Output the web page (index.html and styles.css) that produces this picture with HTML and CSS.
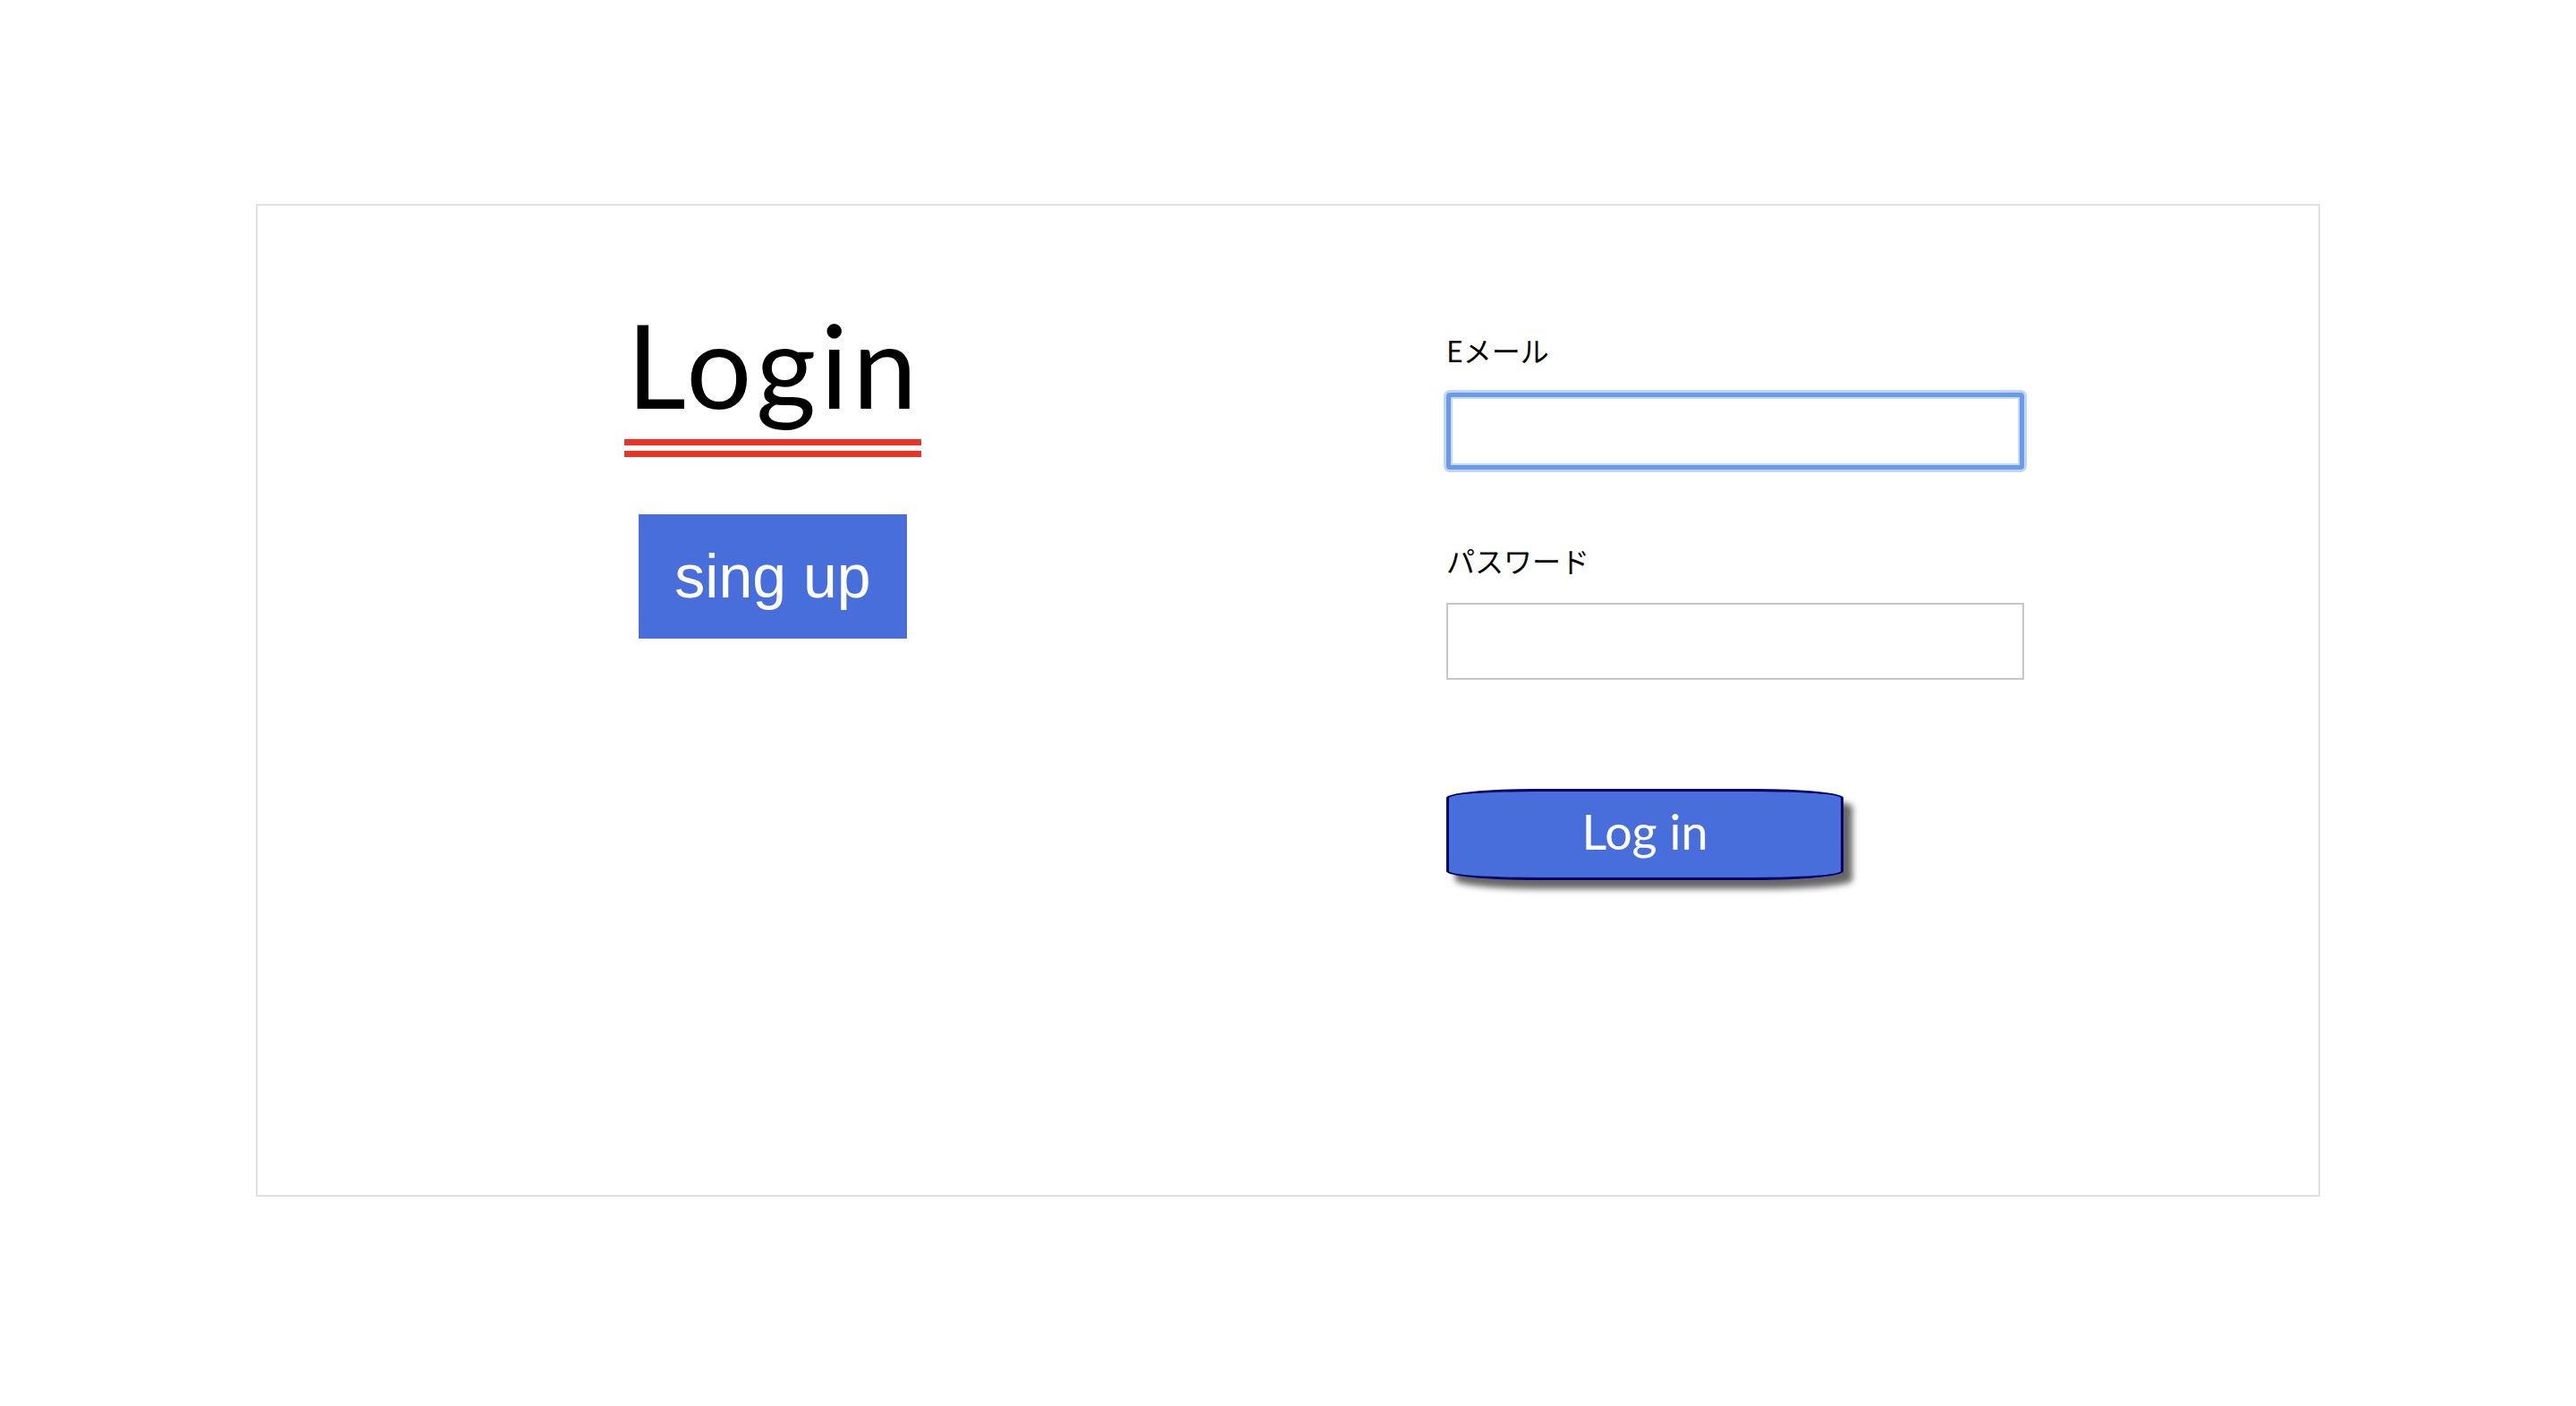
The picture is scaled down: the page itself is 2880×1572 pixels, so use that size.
FILE: index.html
```html
<!DOCTYPE html>
<html lang="ja">
<head>
<meta charset="utf-8">
<title>Login</title>
<link rel="stylesheet" href="styles.css">
</head>
<body>
<div class="card">
  <div class="col-left">
    <h1 class="title">Login</h1>
    <a class="signup" href="#">sing up</a>
  </div>
  <div class="col-right">
    <form class="form">
      <label class="label" for="email">Eメール</label>
      <input class="field field-focus" id="email" type="email">
      <label class="label label-pw" for="pw">パスワード</label>
      <input class="field" id="pw" type="password">
      <button class="login-btn" type="button">Log in</button>
    </form>
  </div>
</div>
</body>
</html>
```

FILE: styles.css
```css
html, body {
  margin: 0;
  padding: 0;
  background: #ffffff;
}

.card {
  box-sizing: border-box;
  width: 2308px;
  height: 1110px;
  margin: 228px auto 0;
  border: 2px solid #e0e0e0;
  display: grid;
  grid-template-columns: 1fr 1fr;
}

.col-left {
  min-width: 0;
  display: flex;
  flex-direction: column;
  align-items: center;
  padding-top: 100px;
}

.title {
  margin: 0;
  font-family: Lato, "Noto Sans", sans-serif;
  font-weight: 400;
  font-size: 129px;
  letter-spacing: 5px;
  line-height: normal;
  color: #000;
  padding: 0 0 7px 3px;
  border-bottom: 20px double #eb3323;
}

.signup {
  margin-top: 64px;
  display: block;
  background: #476edb;
  color: #fff;
  text-decoration: none;
  font-family: "Liberation Sans", Arial, sans-serif;
  font-size: 68px;
  line-height: 78px;
  padding: 30px 40px 31px;
}

.col-right {
  min-width: 0;
  padding-top: 137px;
  padding-left: 177px;
}

.form {
  display: flex;
  flex-direction: column;
  align-items: flex-start;
}

.label {
  font-family: "Noto Sans CJK JP", "Noto Sans", sans-serif;
  font-size: 32px;
  line-height: 48px;
  color: #000;
}

.label-pw {
  margin-top: 77px;
}

.field {
  box-sizing: border-box;
  width: 646px;
  height: 86px;
  margin: 24px 0 0;
  border: 2px solid #c6c6c6;
  background: #fff;
  outline: none;
}

.field-focus {
  border: 5px solid #6a9be9;
  border-radius: 4px;
  box-shadow: 0 0 0 3px rgba(120, 160, 235, 0.45), inset 0 0 0 2px #c8daf7;
}

.login-btn {
  box-sizing: border-box;
  margin-top: 122px;
  width: 444px;
  height: 102px;
  padding: 0 0 6px;
  background: #476edb;
  color: #fff;
  border: 3px solid #00006a;
  border-radius: 100px / 10px;
  box-shadow: 10px 10px 7px rgba(0, 0, 0, 0.6);
  font-family: Lato, "Noto Sans", sans-serif;
  font-size: 54px;
  line-height: 90px;
  cursor: pointer;
}
```
